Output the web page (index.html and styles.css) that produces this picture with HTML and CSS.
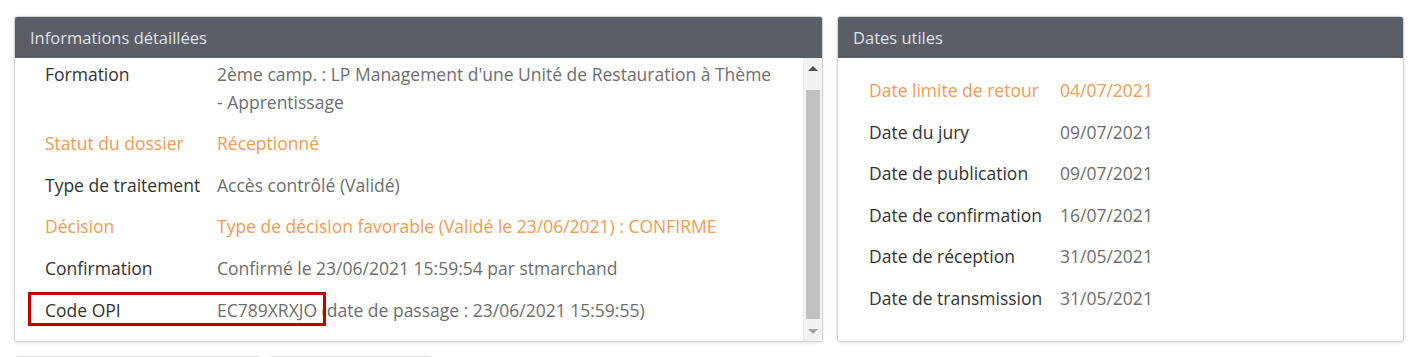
FILE: index.html
```html
<!DOCTYPE html>
<html lang="fr">
<head>
    <meta charset="UTF-8">
    <title>Dossier candidat</title>
    <link rel="stylesheet" href="styles.css">
</head>
<body>
    <div class="panels">
        <div class="panel panel-infos">
            <div class="panel-head">Informations détaillées</div>
            <div class="panel-body">
                <div class="scroll-content">
                    <div class="row">
                        <div class="label">Formation</div>
                        <div class="value">2ème camp. : LP Management d'une Unité de Restauration à Thème<br>- Apprentissage</div>
                    </div>
                    <div class="row orange">
                        <div class="label">Statut du dossier</div>
                        <div class="value">Réceptionné</div>
                    </div>
                    <div class="row">
                        <div class="label">Type de traitement</div>
                        <div class="value">Accès contrôlé (Validé)</div>
                    </div>
                    <div class="row orange">
                        <div class="label">Décision</div>
                        <div class="value">Type de décision favorable (Validé le 23/06/2021) : CONFIRME</div>
                    </div>
                    <div class="row">
                        <div class="label">Confirmation</div>
                        <div class="value">Confirmé le 23/06/2021 15:59:54 par stmarchand</div>
                    </div>
                    <div class="row row-marked">
                        <div class="label">Code OPI</div>
                        <div class="value">EC789XRXJO (date de passage : 23/06/2021 15:59:55)</div>
                        <span class="mark"></span>
                    </div>
                </div>
                <div class="scrollbar">
                    <div class="arrow arrow-up"></div>
                    <div class="track"><div class="thumb"></div></div>
                    <div class="arrow arrow-down"></div>
                </div>
            </div>
        </div>

        <div class="panel panel-dates">
            <div class="panel-head">Dates utiles</div>
            <div class="panel-body dates-body">
                <div class="row orange">
                    <div class="label">Date limite de retour</div>
                    <div class="value">04/07/2021</div>
                </div>
                <div class="row">
                    <div class="label">Date du jury</div>
                    <div class="value">09/07/2021</div>
                </div>
                <div class="row">
                    <div class="label">Date de publication</div>
                    <div class="value">09/07/2021</div>
                </div>
                <div class="row">
                    <div class="label">Date de confirmation</div>
                    <div class="value">16/07/2021</div>
                </div>
                <div class="row">
                    <div class="label">Date de réception</div>
                    <div class="value">31/05/2021</div>
                </div>
                <div class="row">
                    <div class="label">Date de transmission</div>
                    <div class="value">31/05/2021</div>
                </div>
            </div>
        </div>
    </div>

    <div class="buttons">
        <div class="btn btn-wide"></div>
        <div class="btn btn-small"></div>
    </div>
</body>
</html>
```

FILE: styles.css
```css
body {
    margin: 0;
    padding: 16px 0 0 14px;
    background-color: #fff;
    font-family: "Open Sans", "Noto Sans", sans-serif;
    font-size: 17.5px;
    color: #333;
    overflow: hidden;
}
.panels {
    display: flex;
    gap: 14px;
    align-items: stretch;
}
.panel {
    border: 1px solid #d6d6d6;
    border-radius: 3px;
    box-shadow: 0 1px 3px rgba(0, 0, 0, 0.12);
    background-color: #fff;
    display: flex;
    flex-direction: column;
}
.panel-infos {
    width: 807px;
}
.panel-dates {
    width: 565px;
}
.panel-head {
    background-color: #5b5e66;
    color: #dfe1e6;
    font-size: 16.5px;
    height: 41px;
    line-height: 41px;
    padding-left: 15px;
    border-radius: 2px 2px 0 0;
}
.panel-body {
    height: 283px;
    display: flex;
    overflow: hidden;
}
.scroll-content {
    flex: 1;
    margin-top: -4px;
}
.row {
    display: flex;
    padding: 7px 0;
    line-height: 27.6px;
    position: relative;
    white-space: nowrap;
}
.panel-infos .label {
    width: 172px;
    padding-left: 30px;
    flex-shrink: 0;
}
.value {
    color: #6e6e6e;
}
.orange .label,
.orange .value {
    color: #f39a55;
}
.dates-body {
    flex-direction: column;
    padding-top: 12px;
    box-sizing: border-box;
}
.dates-body .label {
    width: 191px;
    padding-left: 31px;
    flex-shrink: 0;
}
.mark {
    position: absolute;
    left: 13px;
    top: 2px;
    width: 292px;
    height: 28px;
    border: 3px solid #c00000;
}
.scrollbar {
    width: 18px;
    background-color: #f1f1f1;
    display: flex;
    flex-direction: column;
    border-left: 1px solid #ececec;
}
.arrow {
    height: 20px;
    display: flex;
    align-items: center;
    justify-content: center;
}
.arrow-up::before {
    content: "";
    border-left: 5px solid transparent;
    border-right: 5px solid transparent;
    border-bottom: 5px solid #505050;
}
.arrow-down::before {
    content: "";
    border-left: 5px solid transparent;
    border-right: 5px solid transparent;
    border-top: 5px solid #a3a3a3;
}
.track {
    flex: 1;
    padding: 12px 2px 2px 2px;
    display: flex;
}
.thumb {
    flex: 1;
    background-color: #c1c1c1;
}
.buttons {
    display: flex;
    gap: 6px;
    margin-top: 14px;
}
.btn {
    height: 32px;
    border: 1px solid #dcdcdc;
    border-radius: 4px;
    background-color: #fafafa;
}
.btn-wide {
    width: 246px;
}
.btn-small {
    width: 163px;
}
```
